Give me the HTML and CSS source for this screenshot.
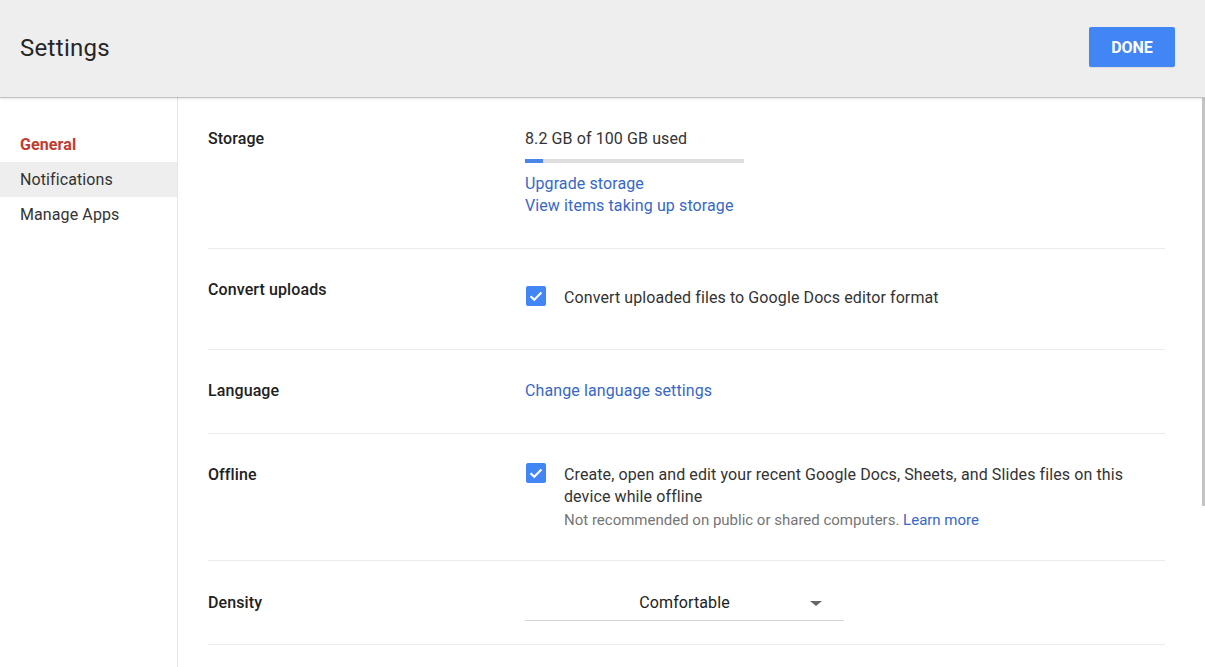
FILE: index.html
```html
<!DOCTYPE html>
<html lang="en">
<head>
<meta charset="utf-8">
<title>Settings</title>
<link rel="stylesheet" href="styles.css">
</head>
<body>
<div class="app">
  <header class="topbar">
    <h1 class="title">Settings</h1>
    <button class="done-btn">DONE</button>
  </header>
  <div class="body">
    <nav class="sidebar">
      <a class="nav-item active">General</a>
      <a class="nav-item hover">Notifications</a>
      <a class="nav-item">Manage Apps</a>
    </nav>
    <main class="content">
      <section class="row row-storage">
        <div class="label">Storage</div>
        <div class="value">
          <div class="usage">8.2 GB of 100 GB used</div>
          <div class="bar"><div class="bar-fill" style="width:8.2%"></div></div>
          <a class="link block">Upgrade storage</a>
          <a class="link block">View items taking up storage</a>
        </div>
      </section>
      <section class="row row-convert">
        <div class="label">Convert uploads</div>
        <div class="value check-row check-single">
          <span class="checkbox"><svg viewBox="0 0 20 20" width="20" height="20"><path d="M4.6 10.2 L8.3 13.8 L15.4 6.6" fill="none" stroke="#fff" stroke-width="2.2"/></svg></span>
          <span class="check-text">Convert uploaded files to Google Docs editor format</span>
        </div>
      </section>
      <section class="row row-language">
        <div class="label">Language</div>
        <div class="value"><a class="link">Change language settings</a></div>
      </section>
      <section class="row row-offline">
        <div class="label">Offline</div>
        <div class="value check-row">
          <span class="checkbox"><svg viewBox="0 0 20 20" width="20" height="20"><path d="M4.6 10.2 L8.3 13.8 L15.4 6.6" fill="none" stroke="#fff" stroke-width="2.2"/></svg></span>
          <div class="check-text">
            <div class="multi">Create, open and edit your recent Google Docs, Sheets, and Slides files on this device while offline</div>
            <div class="hint">Not recommended on public or shared computers. <a class="link">Learn more</a></div>
          </div>
        </div>
      </section>
      <section class="row row-density">
        <div class="label">Density</div>
        <div class="value">
          <div class="select">
            <span class="select-text">Comfortable</span>
            <span class="select-arrow"></span>
          </div>
        </div>
      </section>
    </main>
    <div class="scroll-thumb"></div>
  </div>
</div>
</body>
</html>
```

FILE: styles.css
```css
* { box-sizing: border-box; }
html, body { margin: 0; padding: 0; height: 100%; }
body {
  font-family: Roboto, "Noto Sans", Arial, sans-serif;
  color: #212121;
  background: #fff;
  overflow: hidden;
  letter-spacing: 0.1px;
}
.app {
  display: flex;
  flex-direction: column;
  height: 100vh;
}
.topbar {
  height: 97px;
  flex: 0 0 97px;
  background: #eeeeee;
  display: flex;
  align-items: center;
  justify-content: space-between;
  padding: 0 30px 0 20px;
  box-shadow: 0 1px 1px rgba(0,0,0,0.18), 0 2px 3px rgba(0,0,0,0.08);
  position: relative;
  z-index: 2;
}
.title {
  margin: 0;
  margin-top: -2px;
  font-size: 24px;
  font-weight: 400;
  color: #262626;
  letter-spacing: 0.3px;
}
.done-btn {
  width: 86px;
  height: 40px;
  margin-top: -3px;
  background: #4285f4;
  color: #fff;
  border: none;
  border-radius: 2px;
  font-family: Roboto, Arial, sans-serif;
  font-size: 16px;
  font-weight: 700;
  letter-spacing: 0;
  box-shadow: 0 1px 1px rgba(0,0,0,0.08);
}
.body {
  flex: 1;
  display: flex;
  min-height: 0;
  position: relative;
}
.sidebar {
  width: 178px;
  flex: 0 0 178px;
  border-right: 1px solid #e6e6e6;
  padding-top: 30px;
  display: flex;
  flex-direction: column;
}
.nav-item {
  display: block;
  height: 35px;
  line-height: 35px;
  padding-left: 20px;
  font-size: 16px;
  color: #333;
}
.nav-item.active {
  color: #c13b2e;
  font-weight: 700;
}
.nav-item.hover { background: #eeeeee; }
.content {
  flex: 1;
  overflow: hidden;
  padding: 0 40px 0 30px;
}
.scroll-thumb {
  position: absolute;
  right: 0;
  top: 1px;
  width: 3px;
  height: 408px;
  background: #c4c4c4;
}
.row {
  display: grid;
  grid-template-columns: 317px 1fr;
  align-items: start;
  padding: 31px 0 32px;
  border-bottom: 1px solid #ebebeb;
}
.label {
  font-size: 16px;
  font-weight: 500;
  line-height: 20px;
  color: #212121;
}
.value {
  font-size: 16px;
  line-height: 20px;
  color: #333;
}
.row-storage { padding: 32px 0 31px; }
.usage { line-height: 20px; }
.bar {
  width: 219px;
  height: 4px;
  margin-top: 10px;
  margin-bottom: 10px;
  background: #dedede;
}
.bar-fill { height: 100%; background: #4a86e8; }
.link {
  color: #3867c4;
  text-decoration: none;
  cursor: pointer;
}
.link.block { display: block; line-height: 22px; }
.check-row {
  display: flex;
  align-items: flex-start;
}
.checkbox {
  width: 20px;
  height: 20px;
  flex: 0 0 20px;
  background: #4285f4;
  border-radius: 2px;
  margin-left: 1px;
  margin-right: 18px;
  display: flex;
}
.check-single { margin-top: 5px; align-items: center; }
.check-single .check-text { line-height: 22px; position: relative; top: 2px; }
.row-convert { padding: 31px 0 42px; }
.row-language { padding: 31px 0 32px; }
.row-offline { padding: 31px 0 29px; }
.row-offline .check-row { margin-top: -1px; }
.row-offline .checkbox { margin-top: -1px; }
.multi { line-height: 22px; max-width: 580px; }
.hint {
  font-size: 15px;
  line-height: 22px;
  color: #757575;
  margin-top: 1px;
  letter-spacing: 0;
}
.row-density { padding: 32px 0 23px; }
.select {
  width: 319px;
  height: 28px;
  border-bottom: 1px solid #d6d6d6;
  display: flex;
  align-items: flex-start;
  justify-content: center;
  position: relative;
  color: #212121;
}
.select-text { line-height: 20px; }
.select-arrow {
  position: absolute;
  right: 22px;
  top: 8px;
  width: 0;
  height: 0;
  border-left: 6px solid transparent;
  border-right: 6px solid transparent;
  border-top: 5px solid #666;
}
```
